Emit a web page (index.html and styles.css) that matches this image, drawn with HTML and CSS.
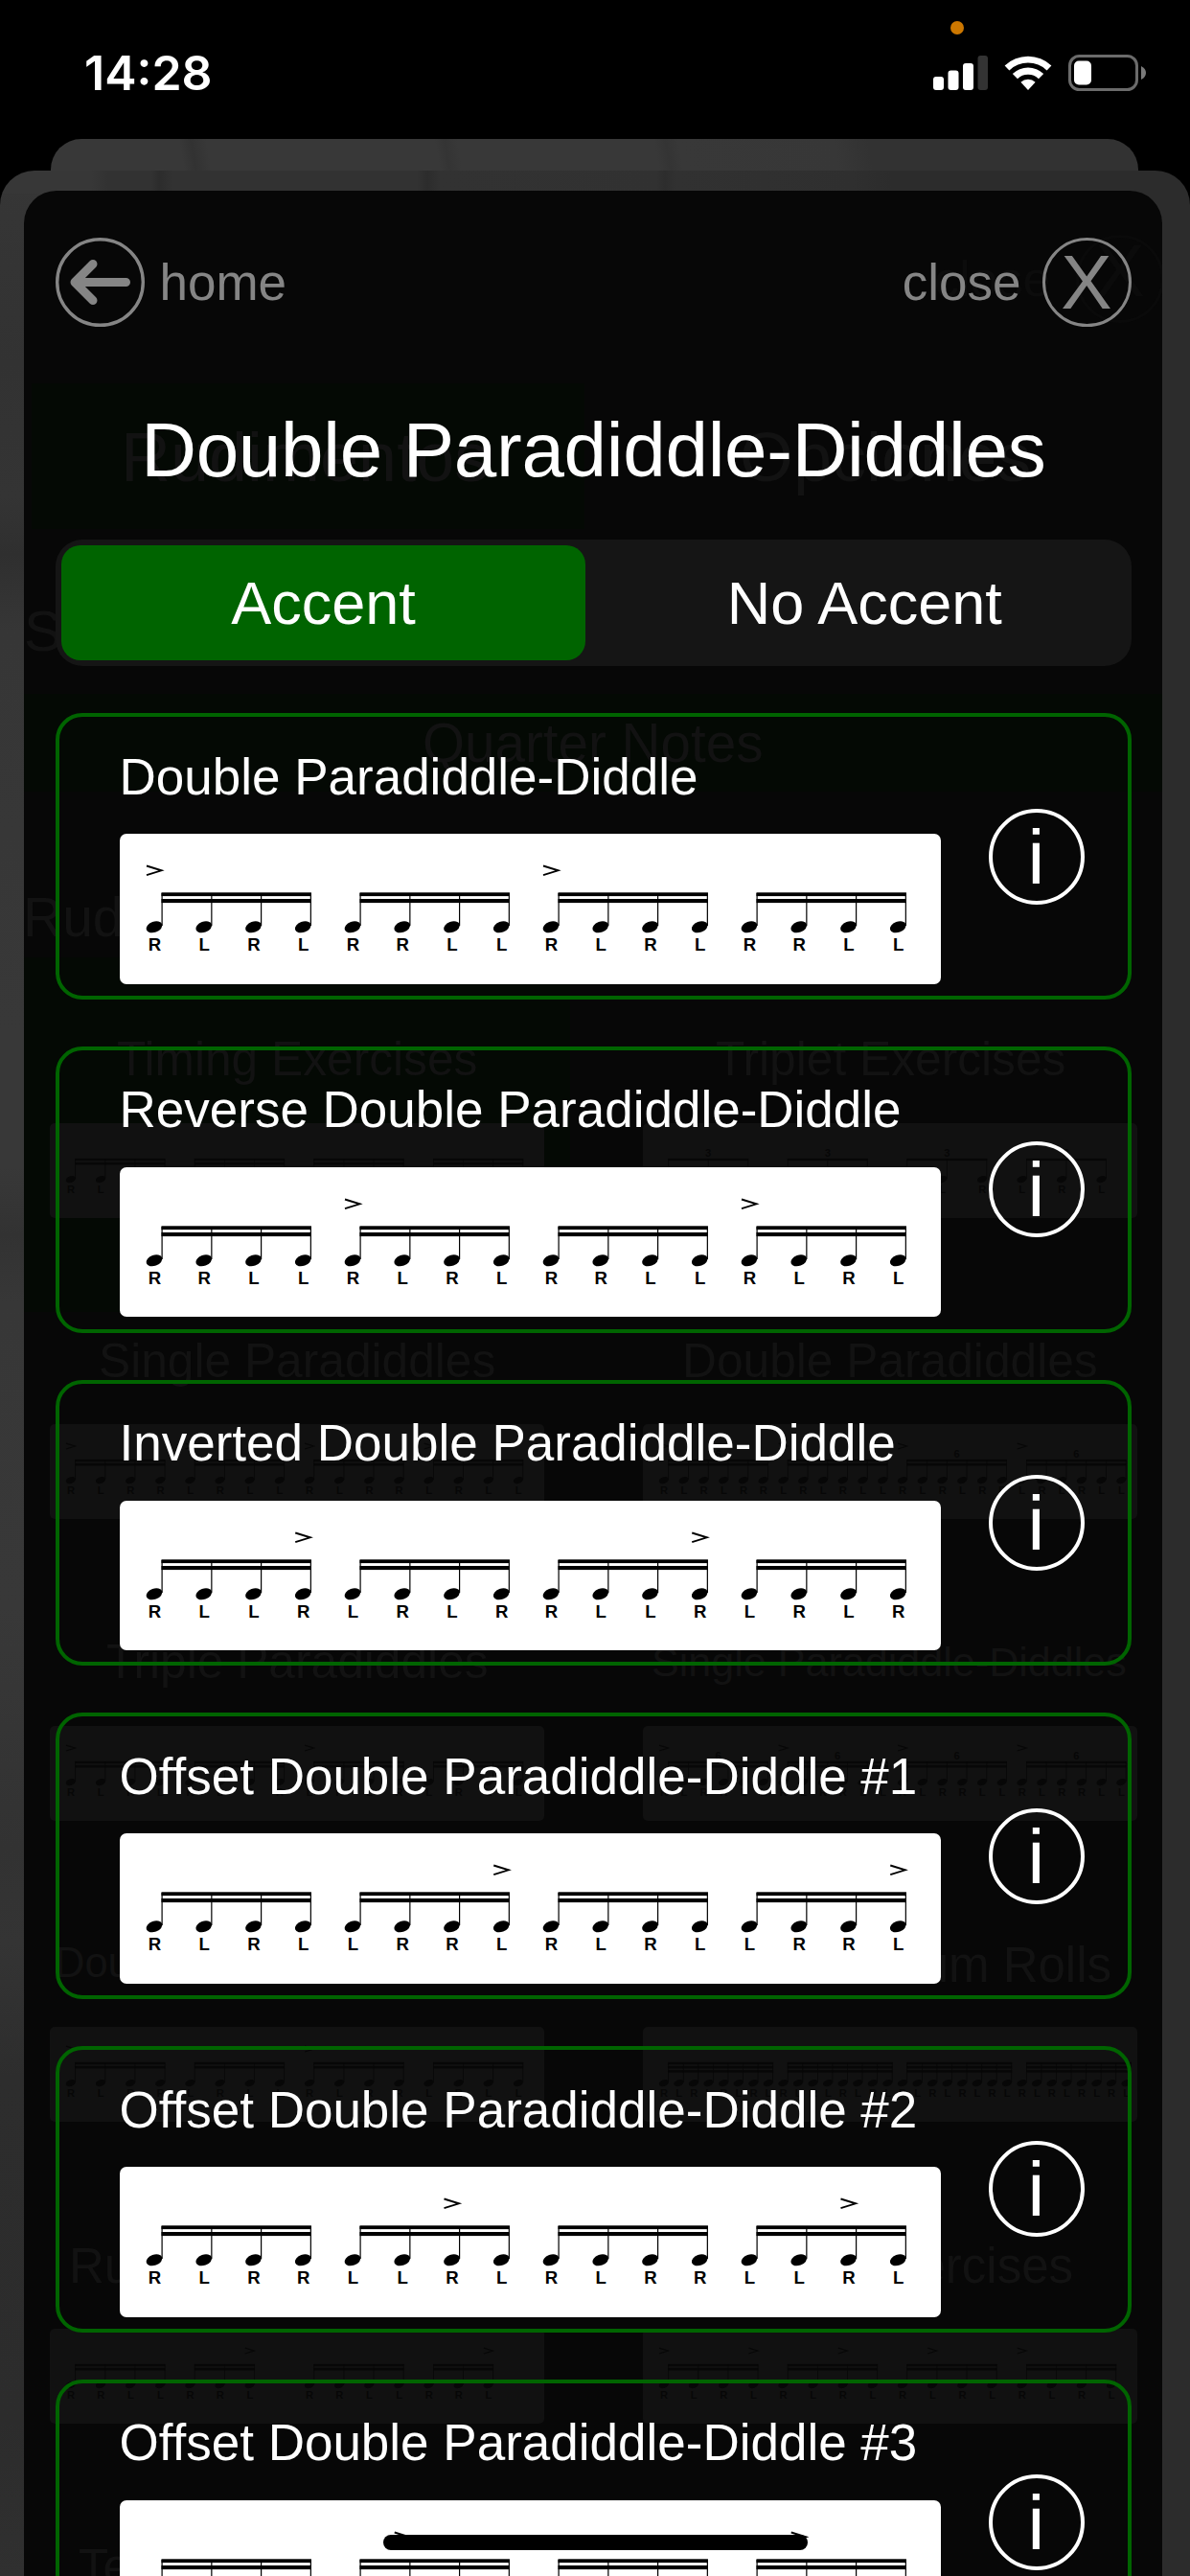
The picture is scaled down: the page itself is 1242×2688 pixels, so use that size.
FILE: index.html
```
<!DOCTYPE html>
<html lang="en">
<head>
    <meta charset="UTF-8">
    <meta name="viewport" content="width=device-width, initial-scale=1.0">
    <title>Double Paradiddle-Diddles</title>
    <link rel="stylesheet" href="styles.css">
</head>
<body>
    <div class="screen">
        <div class="status-bar">
            <span class="time">14:28</span>
            <div class="status-icons">
                <svg class="signal" width="58" height="38" viewBox="0 0 58 38">
                    <rect x="0" y="23" width="11" height="14" rx="3" fill="#fff"/>
                    <rect x="15.5" y="16.5" width="11" height="20.5" rx="3" fill="#fff"/>
                    <rect x="31" y="9" width="11" height="28" rx="3" fill="#fff"/>
                    <rect x="46.5" y="1" width="10.5" height="36" rx="3" fill="#333"/>
                </svg>
                <svg class="wifi" width="50" height="38" viewBox="0 0 50 38">
                    <path d="M0.6 11.4 A35.5 35.5 0 0 1 49.4 11.4 L44.6 16.4 A28.5 28.5 0 0 0 5.4 16.4 Z" fill="#fff"/>
                    <path d="M8.8 20 A23.3 23.3 0 0 1 41.2 20 L36 25.2 A16 16 0 0 0 14 25.2 Z" fill="#fff"/>
                    <path d="M17.4 28.7 A11 11 0 0 1 32.6 28.7 L25 37 Z" fill="#fff"/>
                </svg>
                <svg class="battery" width="82" height="38" viewBox="0 0 82 38">
                    <rect x="1.5" y="1.5" width="70" height="35" rx="10" fill="none" stroke="#6b6b6b" stroke-width="3"/>
                    <rect x="6" y="6.5" width="18" height="25" rx="5" fill="#fff"/>
                    <path d="M76 12 Q81 14.5 81 19 Q81 23.5 76 26 Z" fill="#7a7a7a"/>
                </svg>
            </div>
            <span class="mic-dot"></span>
        </div>

        <div class="sheet sheet-back"></div>
        <div class="sheet sheet-mid"></div>

        <main class="panel">
            <!-- previous page, faintly visible through the panel -->
            <div class="under" id="under"></div>

            <header class="top-nav">
                <a class="nav-item" href="#home">
                    <svg width="93" height="93" viewBox="0 0 93 93" fill="none" stroke="#858585">
                        <circle cx="46.5" cy="46.5" r="44.8" stroke-width="3.4"/>
                        <path d="M73.5 46.5 H20 M39 27.5 L20 46.5 L39 65.5" stroke-width="9" stroke-linecap="round" stroke-linejoin="round"/>
                    </svg>
                    <span class="home-label">home</span>
                </a>
                <a class="nav-item" href="#close">
                    <span class="close-label">close</span>
                    <span class="close-icon">X</span>
                </a>
            </header>

            <h1>Double Paradiddle-Diddles</h1>

            <div class="tabs">
                <button class="tab active">Accent</button>
                <button class="tab">No Accent</button>
            </div>

            <section class="cards" id="cards"></section>
        </main>

        <div class="home-indicator"></div>
    </div>

    <script src="script.js"></script>
</body>
</html>
```
FILE: styles.css
```
body {
    margin: 0;
    background-color: #000;
    font-family: "Liberation Sans", Arial, sans-serif;
    color: #fff;
}

.screen {
    position: relative;
    width: 1242px;
    height: 2688px;
    overflow: hidden;
    background-color: #000;
}

/* Status bar */
.status-bar {
    position: relative;
    display: flex;
    justify-content: space-between;
    height: 199px;
    padding: 0 45px 0 88px;
    box-sizing: border-box;
}

.time {
    margin-top: 46px;
    font-family: Inter, "Liberation Sans", sans-serif;
    font-size: 50px;
    font-weight: 600;
    line-height: 60px;
}

.status-icons {
    display: flex;
    margin-top: 57px;
}

.wifi {
    margin: 0 17px 0 16px;
}

.mic-dot {
    position: absolute;
    top: 22px;
    left: 992px;
    width: 14px;
    height: 14px;
    border-radius: 50%;
    background-color: #cc7700;
}

/* Stacked sheets behind the panel */
.sheet {
    position: absolute;
}

.sheet-back {
    top: 145px;
    left: 53px;
    width: 1135px;
    height: 60px;
    border-radius: 32px 32px 0 0;
    background: linear-gradient(80deg, #383838 0, #383838 142px, #323232 154px, #383838 170px, #383838 405px, #343434 415px, #383838 428px, #383838 630px, #343434 642px, #383838 655px, #373737 815px, #323232 850px, #323232 100%);
}

.sheet-mid {
    top: 178px;
    left: 0;
    width: 1242px;
    height: 2510px;
    border-radius: 36px 36px 0 0;
    background:
        linear-gradient(to right, #373737 0, #373737 96px, #323232 112px, #323232 158px, #2c2c2c 166px, #323232 180px, #323232 435px, #2c2c2c 446px, #323232 460px, #313131 685px, #2d2d2d 694px, #313131 705px, #2f2f2f 890px, #2c2c2c 930px) top / 100% 24px no-repeat,
        linear-gradient(to right, rgba(44, 44, 44, 0) 620px, #2c2c2c 621px),
        linear-gradient(100deg, #363636 0, #363636 100%) top / 0 0 no-repeat,
        linear-gradient(to bottom, #363636 0, #323232 200px, #343434 340px, #2f2f2f 400px, #363636 480px, #383838 900px, #383838 1040px, #323232 1110px, #373737 1180px, #383838 1500px, #323232 1750px, #343434 1850px, #2d2d2d 1990px, #2c2c2c 2350px, #303030 100%);
}

/* Panel */
.panel {
    position: relative;
    width: 1122.5px;
    height: 2440px;
    margin-left: 25px;
    padding: 49px 32.5px 0 33px;
    border-radius: 34px 34px 0 0;
    background-color: #070707;
    overflow: hidden;
}

.top-nav {
    position: relative;
    display: flex;
    justify-content: space-between;
    height: 93px;
}

.nav-item {
    display: flex;
    align-items: center;
    color: #858585;
    font-size: 53px;
    text-decoration: none;
}

.home-label {
    margin-left: 15.5px;
}

.close-label {
    margin-right: 22px;
}

.close-icon {
    width: 93px;
    height: 93px;
    border: 3px solid #858585;
    border-radius: 50%;
    box-sizing: border-box;
    font-size: 80px;
    line-height: 87px;
    text-align: center;
}

h1 {
    position: relative;
    margin: 83px 0 46.5px;
    font-size: 80px;
    font-weight: normal;
    letter-spacing: -0.3px;
    line-height: 92px;
    text-align: center;
    white-space: nowrap;
}

.tabs {
    position: relative;
    display: flex;
    height: 132px;
    padding: 6px;
    box-sizing: border-box;
    border-radius: 28px;
    background-color: #151515;
}

.tab {
    flex: 1;
    padding: 0 0 0 19px;
    border: none;
    border-radius: 20px;
    background: none;
    color: #fff;
    font-family: inherit;
    font-size: 63px;
}

.tab.active {
    flex: 0 0 547px;
    padding: 0;
    background-color: #006400;
}

.cards {
    position: relative;
    display: flex;
    flex-direction: column;
    gap: 49px;
    margin-top: 49.8px;
}

.card {
    display: flex;
    justify-content: space-between;
    align-items: center;
    flex: none;
    height: 298.7px;
    padding: 0 45px 0 62.5px;
    box-sizing: border-box;
    border: 4px solid #006400;
    border-radius: 28px;
}

.card h2 {
    margin: 0 0 29.5px;
    font-size: 53px;
    font-weight: normal;
    line-height: 60px;
}

.card-body {
    align-self: flex-start;
    padding-top: 32.5px;
}

.score {
    display: block;
    border-radius: 7px;
    background-color: #fff;
    color: #000;
}

.score text {
    font-family: "Liberation Sans", Arial, sans-serif;
    font-size: 18.6px;
    font-weight: bold;
    text-anchor: middle;
    fill: currentColor;
}

.info {
    width: 100px;
    height: 100px;
    border: 4px solid #fff;
    border-radius: 50%;
    box-sizing: border-box;
    font-size: 80px;
    line-height: 93px;
    text-align: center;
}

/* Page under the panel */
.under {
    position: absolute;
    inset: 0;
    color: #121212;
}

.under .tint {
    position: absolute;
    background-color: #040904;
}

.under .label {
    position: absolute;
    line-height: 1;
    white-space: nowrap;
}

.under .score {
    position: absolute;
    width: 516px;
    height: 98.7px;
    border-radius: 5px;
    background-color: #111;
    color: #070707;
}

.under .ring {
    position: absolute;
    top: 46px;
    left: 1098px;
    width: 86px;
    height: 86px;
    border: 3px solid #0a0a0a;
    border-radius: 50%;
}

.home-indicator {
    position: absolute;
    top: 2645px;
    left: 400px;
    width: 443px;
    height: 16px;
    border-radius: 8px;
    background-color: #000;
}
```
FILE: script.js
```
// Draws a bar of notes. sticking: letters of each beat, separated by spaces
function drawScore(sticking, accents, options = {}) {
    const beams = options.beams || 2;
    const beat = 207;
    let svg = '';
    let index = 0;

    sticking.split(' ').forEach((group, g) => {
        const count = options.div || group.length;
        const step = beat / count;
        const start = 36 + g * beat;
        const x1 = start + 8.1;
        const x2 = x1 + (group.length - 1) * step;

        svg += `<rect x="${x1 - 0.6}" y="61.3" width="${x2 - x1 + 1.2}" height="3.8"/>`;
        if (beams > 1) {
            svg += `<rect x="${x1 - 0.6}" y="68" width="${x2 - x1 + 1.2}" height="4.1"/>`;
        }
        if (beams > 2) {
            svg += `<rect x="${x1 - 0.6}" y="75" width="${x2 - x1 + 1.2}" height="4.1"/>`;
        }
        if (options.number) {
            svg += `<text x="${(x1 + x2) / 2}" y="58">${options.number}</text>`;
        }

        group.split('').forEach((hand, i) => {
            const x = start + i * step;
            svg += `<rect x="${x + 7.5}" y="62" width="1.2" height="34"/>`;
            svg += `<ellipse cx="${x}" cy="97.3" rx="8.7" ry="5.6" transform="rotate(-20 ${x} 97.3)"/>`;
            svg += `<text x="${x + 0.4}" y="122">${hand}</text>`;
            if (accents.includes(index)) {
                svg += `<path d="M${x - 8} 33.5 L${x + 7.5} 38.3 L${x - 8} 43.2" fill="none" stroke="currentColor" stroke-width="1.9"/>`;
            }
            index++;
        });
    });
    return svg;
}

const exercises = [
    { name: 'Double Paradiddle-Diddle', sticking: 'RLRL RRLL RLRL RRLL', accents: [0, 8] },
    { name: 'Reverse Double Paradiddle-Diddle', sticking: 'RRLL RLRL RRLL RLRL', accents: [4, 12] },
    { name: 'Inverted Double Paradiddle-Diddle', sticking: 'RLLR LRLR RLLR LRLR', accents: [3, 11] },
    { name: 'Offset Double Paradiddle-Diddle #1', sticking: 'RLRL LRRL RLRL LRRL', accents: [7, 15] },
    { name: 'Offset Double Paradiddle-Diddle #2', sticking: 'RLRR LLRL RLRR LLRL', accents: [6, 14] },
    { name: 'Offset Double Paradiddle-Diddle #3', sticking: 'RRLL RLRL RRLL RLRL', accents: [5, 13] },
];

const cards = document.getElementById('cards');
exercises.forEach(item => {
    const card = document.createElement('article');
    card.classList.add('card');
    card.innerHTML = `
        <div class="card-body">
            <h2>${item.name}</h2>
            <svg class="score" width="857.5" height="156.5" viewBox="0 0 857.5 156.5" fill="currentColor">${drawScore(item.sticking, item.accents)}</svg>
        </div>
        <span class="info">i</span>
    `;
    cards.appendChild(card);
});

// Page under the panel: coordinates are relative to the panel
const tints = [
    [8, 201, 577, 152],
    [0, 525, 1188, 102],
    [0, 800, 570, 370],
];

// text, x, baseline, font size, anchored to the right edge, color
const labels = [
    ['close', 950, 110, 52, false, '#0c0c0c'],
    ['X', 1118, 110, 78, false, '#0b0b0b'],
    ['Rudimentos', 101, 303, 72],
    ['Opciones', 747, 303, 72],
    ['S', 0, 481, 60],
    ['Quarter Notes', 416, 597, 56.6],
    ['Rud', -1, 778, 57],
    ['Timing Exercises', 97, 924, 49.7],
    ['Triplet Exercises', 722, 924, 49.7],
    ['Single Paradiddles', 78, 1239, 49.7],
    ['Double Paradiddles', 687, 1239, 49.7],
    ['Triple Paradiddles', 86, 1553, 49.7],
    ['Single Paradiddle-Diddles', 655, 1550, 43.1],
    ['Dou', 32, 1865, 43.5],
    ['Drum Rolls', 1135, 1869, 51, true],
    ['Ru', 47, 2183, 51],
    ['Exercises', 1095, 2183, 51, true],
    ['Te', 57, 2497, 51],
];

const underScores = [
    [27, 973, 'RLRL RLRL RLRL RLRL', []],
    [646, 973, 'RLR LRL RLR LRL', [], { beams: 1, number: 3 }],
    [27, 1287, 'RLRR LRLL RLRR LRLL', [0, 4, 8, 12]],
    [646, 1287, 'RLRLRR LRLRLL RLRLRR LRLRLL', [0, 6, 12, 18], { number: 6 }],
    [27, 1602, 'RLRL RLRR LRLR LRLL', [0, 8]],
    [646, 1602, 'RLRRLL RLRRLL RLRRLL RLRRLL', [0, 6, 12, 18], { number: 6 }],
    [27, 1916, 'RLRR LRLL RLRR LRLL', [0, 8]],
    [646, 1916, 'RLRLRLRL RLRLRLRL RLRLRLRL RLRLRLRL', [], { beams: 3 }],
    [27, 2231, 'RRLL RRL RRLL RRL', [6, 13], { div: 4 }],
    [646, 2231, 'RLRL RLRL RLRL RLRL', [0, 3, 6, 9, 12]],
];

const under = document.getElementById('under');
let html = '<span class="ring"></span>';
tints.forEach(([x, y, w, h]) => {
    html += `<div class="tint" style="left:${x}px;top:${y}px;width:${w}px;height:${h}px"></div>`;
});
labels.forEach(([text, x, y, size, right, color]) => {
    const side = right ? `right:${1188 - x}px` : `left:${x}px`;
    html += `<span class="label" style="${side};top:${y - size * 0.8465}px;font-size:${size}px;${color ? 'color:' + color : ''}">${text}</span>`;
});
underScores.forEach(([x, y, sticking, accents, options]) => {
    html += `<svg class="score" style="left:${x}px;top:${y}px" viewBox="0 0 857 164" fill="currentColor">${drawScore(sticking, accents, options)}</svg>`;
});
under.innerHTML = html;
```
